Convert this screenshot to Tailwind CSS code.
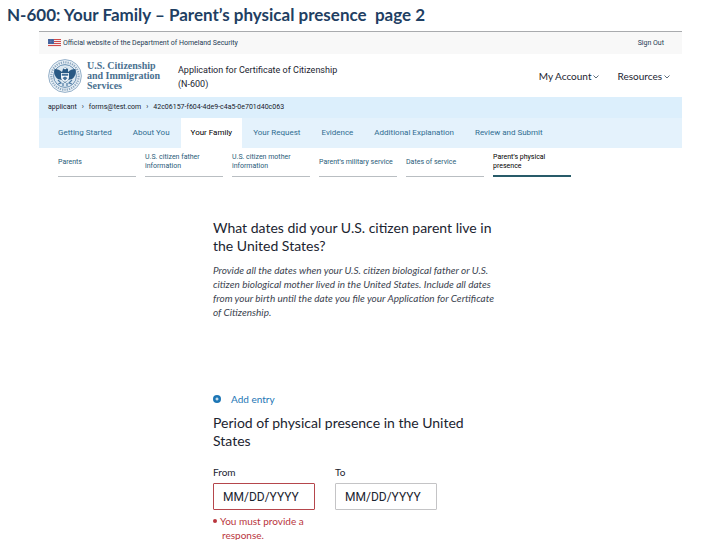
<!DOCTYPE html>
<html lang="en">
<head>
<meta charset="utf-8">
<meta name="viewport" content="width=device-width, initial-scale=1">
<title>N-600: Your Family</title>
<script src="https://cdn.jsdelivr.net/npm/@tailwindcss/browser@4"></script>
</head>
<body class="bg-white font-['Roboto',sans-serif] text-[#1b2430]">
<h1 class="h-[31px] whitespace-pre pl-[7px] pt-1 font-['Lato',sans-serif] text-[17px] leading-[22px] font-bold text-[#1f3f63]">N-600: Your Family – Parent’s physical presence  page 2</h1>
<div class="mr-[38px] ml-[39px]">
  <div class="flex h-[23px] items-center justify-between border-t border-[#a9abae] bg-[#f8f8f8] pr-[18px] pl-[9px] text-[7px] text-[#1d3b53]">
    <p class="flex items-center gap-[2px]">
      <svg class="h-2 w-[13px]" viewBox="0 0 13 8" aria-hidden="true"><path fill="#f3e9ea" d="M0 0h13v8H0z"/><path stroke="#cf4a4a" d="M0 .5h13M0 2.5h13M0 4.5h13M0 6.5h13"/><path fill="#3c5c98" d="M0 0h6v5H0z"/><path stroke="#a9bbdc" stroke-width=".5" stroke-dasharray=".6 .9" d="M.6 1h5M.6 2.5h5M.6 4h5"/></svg>
      <span>Official website of the Department of Homeland Security</span>
    </p>
    <a href="#">Sign Out</a>
  </div>
  <header class="flex h-[43px] items-center pr-3 pl-[9px]">
    <svg class="size-[34px] shrink-0" viewBox="0 0 34 34" role="img" aria-label="Department seal">
      <circle cx="17" cy="17" r="16.4" fill="#edf3f8" stroke="#7b9dbb" stroke-width=".8"/>
      <circle cx="17" cy="17" r="13.7" fill="none" stroke="#8faac2" stroke-width="2.2" stroke-dasharray="1.3 1"/>
      <circle cx="17" cy="17" r="11.4" fill="#dce8f1" stroke="#4d7aa3" stroke-width=".8"/>
      <path fill="#295984" d="M6.500 10c3 0 5.500 1 7.500 3l1-3 2-2 3 2v3c2-2 4-3 7.500-3 1 4-.5 8-3.500 10l-4 1-3 3-3-3-4-1c-3-2-4.500-6-3.500-10z"/>
      <path fill="#f5f8fb" d="m15.400 9 1.600-.8 1.800 1-1.800 1.300zM13 14h8v4c0 3-2 4-4 5-2-1-4-2-4-5z"/>
      <path fill="#426f99" d="M13.800 14.700h6.400v2.100h-6.400zM14.500 19l2.500-1.500 2.500 1.500-2.500 2.500z"/>
      <path fill="none" stroke="#4d7aa3" stroke-width="1.200" d="m10 21 3 3-3 1m14-4-3 3 3 1m-9-1v3m4-3v3"/>
    </svg>
    <p class="ml-[5px] w-[91px] font-['Liberation_Serif',serif] text-[10px] leading-[10px] font-bold whitespace-nowrap text-[#49708f]">U.S. Citizenship<br>and Immigration<br>Services</p>
    <p class="pt-[2px] text-[9px] leading-[14px]">Application for Certificate of Citizenship<br>(N-600)</p>
    <nav class="ml-auto flex gap-[18px] pt-[2px] font-['Lato',sans-serif] text-[10px]" aria-label="Account">
      <button class="flex items-center gap-[2px]">My Account<svg class="h-1 w-[6px]" viewBox="0 0 6 4" fill="none" stroke="#33475a" stroke-width=".8" aria-hidden="true"><path d="m.5.5 2.500 2.500L5.500.5"/></svg></button>
      <button class="flex items-center gap-[2px]">Resources<svg class="h-1 w-[6px]" viewBox="0 0 6 4" fill="none" stroke="#33475a" stroke-width=".8" aria-hidden="true"><path d="m.5.5 2.500 2.500L5.500.5"/></svg></button>
    </nav>
  </header>
  <div class="flex h-[21px] items-center gap-[5px] bg-[#dceffc] pl-[9px] text-[7px] text-[#17202a]">
    <span>applicant</span><span>›</span><span>forms@test.com</span><span>›</span><span>42c06157-f604-4de9-c4a5-0e701d40c063</span>
  </div>
  <nav class="flex h-[30px] gap-px bg-[#e4f2fc] pl-[9px] text-[8px] whitespace-nowrap text-[#2f6d91]" aria-label="Sections">
    <a href="#" class="flex items-center px-[10px]">Getting Started</a>
    <a href="#" class="flex items-center px-[10px]">About You</a>
    <a href="#" class="flex items-center bg-white px-[10px] text-black" aria-current="page">Your Family</a>
    <a href="#" class="flex items-center px-[10px]">Your Request</a>
    <a href="#" class="flex items-center px-[10px]">Evidence</a>
    <a href="#" class="flex items-center px-[10px]">Additional Explanation</a>
    <a href="#" class="flex items-center px-[10px]">Review and Submit</a>
  </nav>
  <nav class="grid h-[29px] grid-cols-[repeat(6,78px)] gap-[9px] pl-[19px] text-[7px] leading-[9px] whitespace-nowrap text-[#285b78]" aria-label="Pages">
    <a href="#" class="flex items-center border-b border-[#b9bec2]">Parents</a>
    <a href="#" class="flex items-center border-b border-[#b9bec2]">U.S. citizen father<br>information</a>
    <a href="#" class="flex items-center border-b border-[#b9bec2]">U.S. citizen mother<br>information</a>
    <a href="#" class="flex items-center border-b border-[#b9bec2]">Parent’s military service</a>
    <a href="#" class="flex items-center border-b border-[#b9bec2]">Dates of service</a>
    <a href="#" class="flex items-center border-b-2 border-[#285b69] text-black" aria-current="page">Parent’s physical<br>presence</a>
  </nav>
  <main class="mx-auto max-w-[295px] pt-[42px] font-['Lato',sans-serif] whitespace-nowrap">
    <h2 class="text-[14px] leading-[18px]">What dates did your U.S. citizen parent live in<br>the United States?</h2>
    <p class="mt-2 text-[10px] leading-[14px] text-[#3c4450] italic">Provide all the dates when your U.S. citizen biological father or U.S.<br>citizen biological mother lived in the United States. Include all dates<br>from your birth until the date you file your Application for Certificate<br>of Citizenship.</p>
    <button class="mt-[73px] flex h-[14px] items-center gap-[10px] text-[10px] text-[#1d76b5]">
      <svg class="size-2" viewBox="0 0 8 8" aria-hidden="true"><circle cx="4" cy="4" r="4" fill="#1d76b5"/><path stroke="#fff" d="M4 2.500v3M2.500 4h3"/></svg>
      Add entry
    </button>
    <h2 class="mt-2 text-[14px] leading-[18px]">Period of physical presence in the United<br>States</h2>
    <form class="mt-[15px] flex gap-5 text-[10px] leading-[14px]">
      <div class="w-[102px]">
        <label for="from" class="block">From</label>
        <input id="from" type="text" placeholder="MM/DD/YYYY" aria-describedby="from-error" class="mt-1 block h-[27px] w-full rounded-[1px] border border-[#b5464c] px-[9px] font-['Roboto',sans-serif] text-[12px] placeholder:text-[#1b2430]">
        <p id="from-error" class="relative mt-1 pl-[9px] -indent-[2px] text-[#b9353d] before:absolute before:top-[5px] before:left-0 before:size-1 before:rounded-full before:bg-[#b9353d]">You must provide a<br>response.</p>
      </div>
      <div class="w-[102px]">
        <label for="to" class="block">To</label>
        <input id="to" type="text" placeholder="MM/DD/YYYY" class="mt-1 block h-[27px] w-full rounded-[1px] border border-[#c4c4c6] px-[9px] font-['Roboto',sans-serif] text-[12px] placeholder:text-[#1b2430]">
      </div>
    </form>
  </main>
</div>
</body>
</html>
